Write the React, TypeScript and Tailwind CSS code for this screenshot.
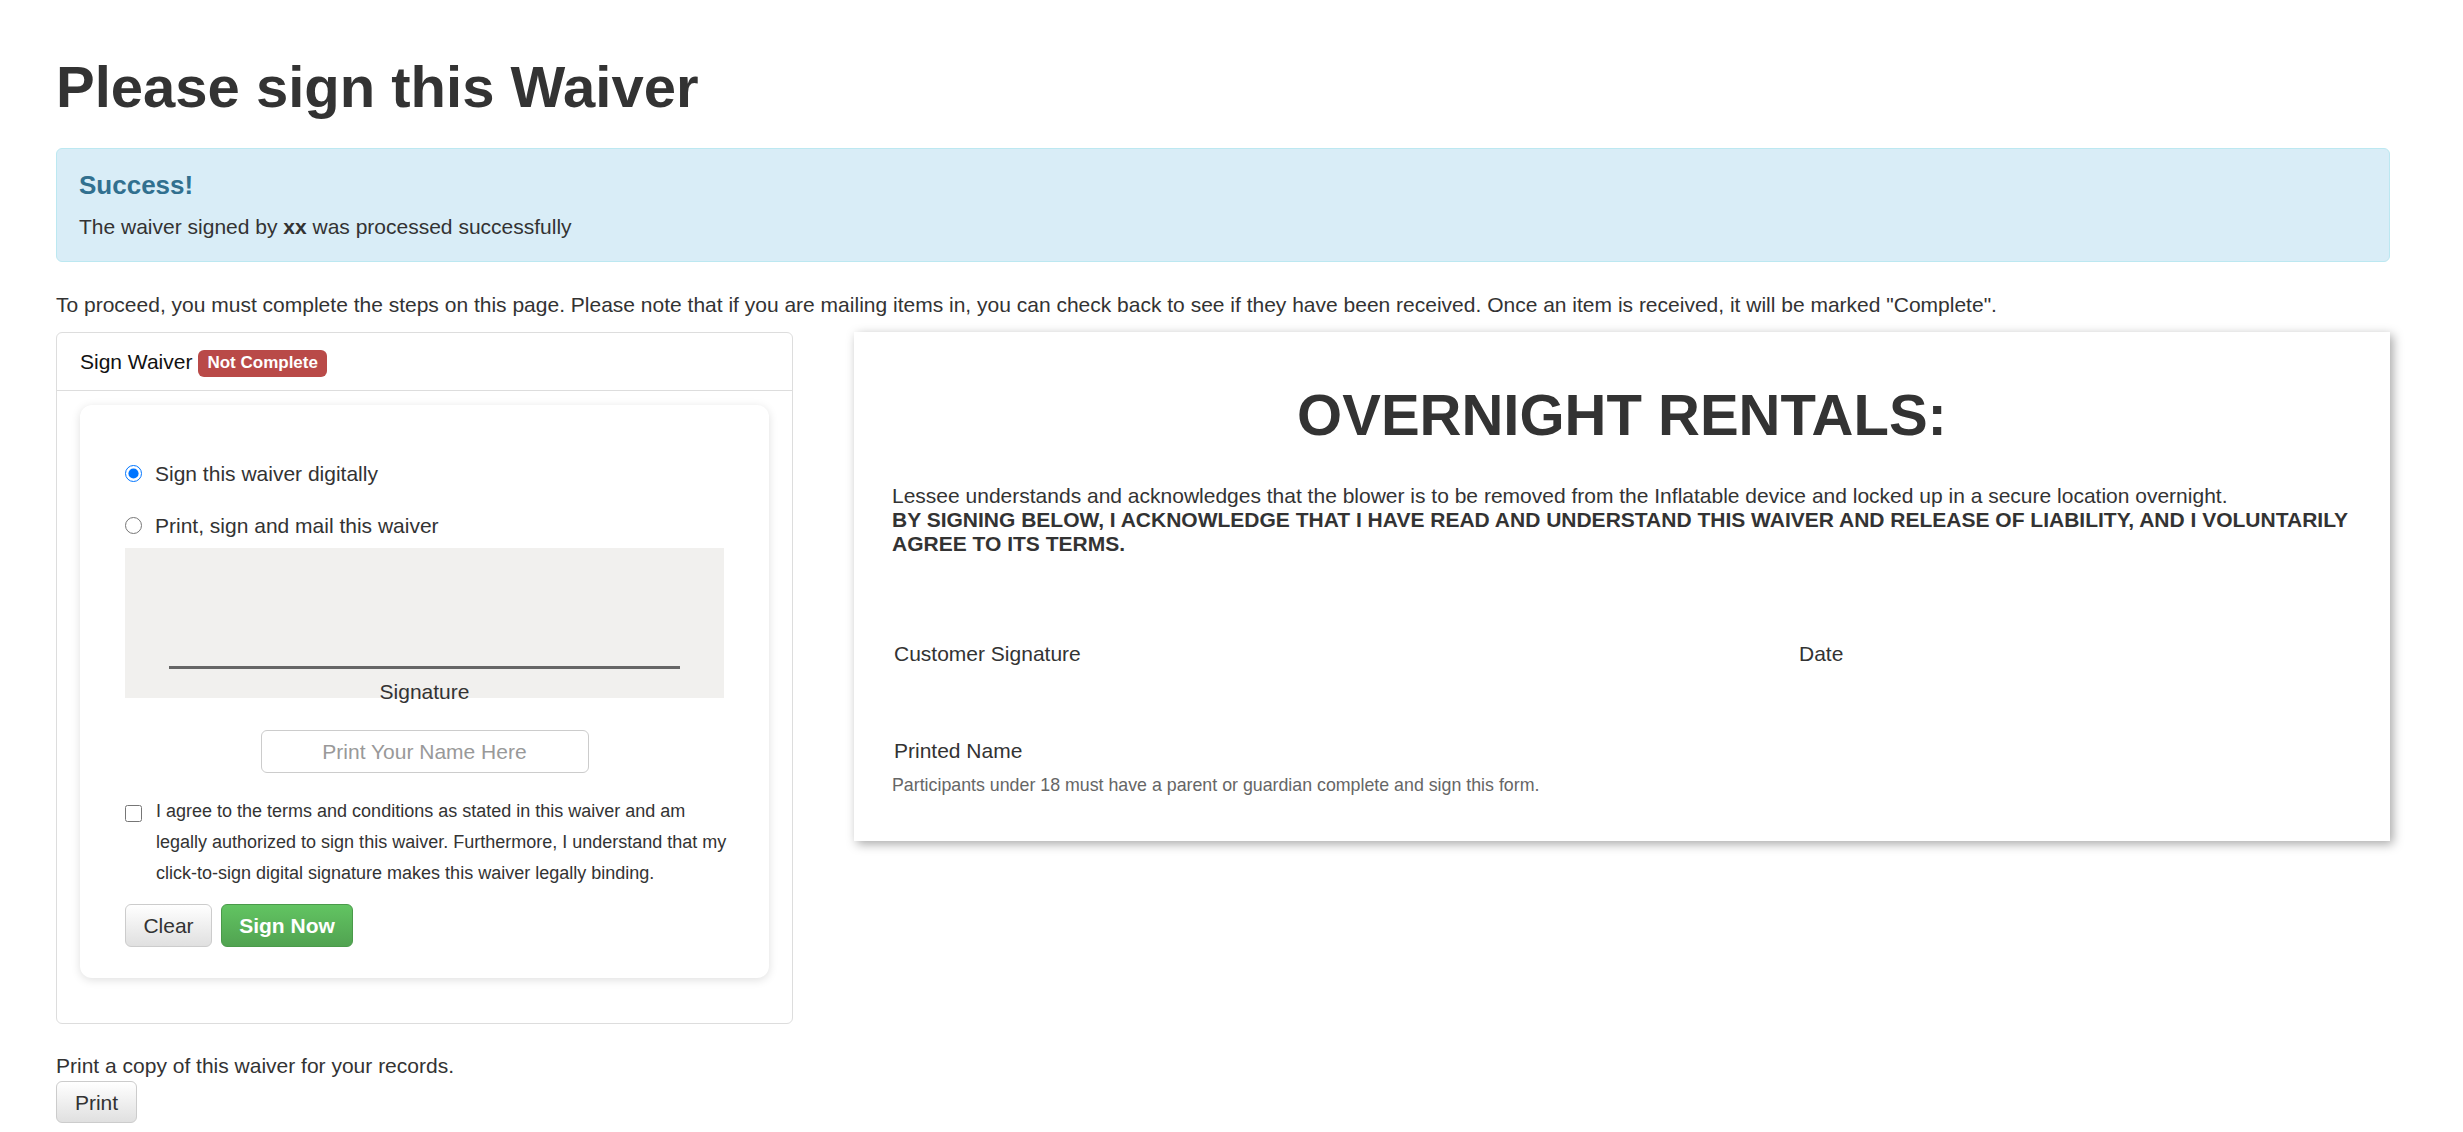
import React from 'react';

const font = { fontFamily: '"Liberation Sans", Arial, sans-serif' };

const SignWaiverPanel: React.FC = () => {
  return (
    <div className="w-[737px] shrink-0 rounded-[6px] border border-[#dddddd] bg-white">
      <div className="flex h-[58px] items-center border-b border-[#dddddd] px-[23px] text-[21px] leading-[30px] text-[#111]">
        <span>Sign Waiver</span>
        <span className="ml-[6px] mt-[3px] inline-flex h-[27px] items-center rounded-[6px] bg-[#b94a48] px-[9px] text-[17px] font-bold text-white">
          Not Complete
        </span>
      </div>
      <div className="px-[23px] pt-[14px] pb-[45px]">
        <div className="rounded-[12px] bg-white px-[45px] pt-[53px] pb-[31px] shadow-[0_2px_10px_rgba(0,0,0,0.13)]">
          <label className="flex h-[30px] items-center gap-[13px] text-[21px] text-[#333]">
            <input type="radio" name="mode" defaultChecked className="m-0 h-[17px] w-[17px]" />
            <span>Sign this waiver digitally</span>
          </label>
          <label className="mt-[22px] flex h-[30px] items-center gap-[13px] text-[21px] text-[#333]">
            <input type="radio" name="mode" className="m-0 h-[17px] w-[17px]" />
            <span>Print, sign and mail this waiver</span>
          </label>

          <div className="mt-[8px] h-[150px] bg-[#f1f0ee]">
            <div className="mx-[44px] h-[3px] translate-y-[118px] bg-[#666]" />
            <div className="translate-y-[126px] text-center text-[21px] leading-[30px] text-[#333]">Signature</div>
          </div>

          <div className="mt-[32px] flex justify-center">
            <input
              type="text"
              placeholder="Print Your Name Here"
              className="h-[43px] w-[328px] rounded-[6px] border border-[#cccccc] text-center text-[21px] text-[#333] outline-none placeholder:text-[#999]"
              style={font}
            />
          </div>

          <div className="mt-[23px] flex items-start gap-[14px]">
            <input type="checkbox" className="m-0 mt-[9px] h-[17px] w-[17px] shrink-0" />
            <p className="-mr-[10px] text-[18px] leading-[31px] text-[#333]">
              I agree to the terms and conditions as stated in this waiver and am legally authorized to sign this waiver.
              Furthermore, I understand that my click-to-sign digital signature makes this waiver legally binding.
            </p>
          </div>

          <div className="mt-[15px] flex gap-[9px]">
            <button
              className="h-[43px] w-[87px] rounded-[6px] border border-[#cccccc] bg-gradient-to-b from-white to-[#e0e0e0] text-[21px] text-[#333]"
              style={font}
            >
              Clear
            </button>
            <button
              className="h-[43px] w-[132px] rounded-[6px] border border-[#4a9a4a] bg-gradient-to-b from-[#62c462] to-[#51a351] text-[21px] font-bold text-white"
              style={font}
            >
              Sign Now
            </button>
          </div>
        </div>
      </div>
    </div>
  );
};

const WaiverDocument: React.FC = () => {
  return (
    <div className="flex-1 bg-white px-[38px] pt-[51px] pb-[43px] shadow-[3px_3px_10px_rgba(0,0,0,0.35)]">
      <h2 className="text-center text-[58px] font-bold leading-[1.1] text-[#333]">OVERNIGHT RENTALS:</h2>
      <div className="mt-[37px] text-[21px] leading-[24px] text-[#333]">
        <p>Lessee understands and acknowledges that the blower is to be removed from the Inflatable device and locked up in a secure location overnight.</p>
        <p className="font-bold">
          BY SIGNING BELOW, I ACKNOWLEDGE THAT I HAVE READ AND UNDERSTAND THIS WAIVER AND RELEASE OF LIABILITY, AND I VOLUNTARILY AGREE TO ITS TERMS.
        </p>
      </div>
      <div className="mt-[83px] flex pl-[2px] text-[21px] leading-[30px] text-[#333]">
        <div className="w-[905px]">Customer Signature</div>
        <div>Date</div>
      </div>
      <div className="mt-[67px] pl-[2px] text-[21px] leading-[30px] text-[#333]">Printed Name</div>
      <p className="mt-[7px] text-[17.8px] leading-[25px] text-[#666]">
        Participants under 18 must have a parent or guardian complete and sign this form.
      </p>
    </div>
  );
};

export default function App() {
  return (
    <div className="min-h-screen bg-white pl-[56px] pr-[73px] pt-[55px] pb-[12px] text-[#333]" style={font}>
      <h1 className="text-[58px] font-bold leading-[1.1] text-[#333]">Please sign this Waiver</h1>

      <div className="mt-[29px] rounded-[6px] border border-[#bce8f1] bg-[#d9edf7] px-[22px] pt-[22px] pb-[19px]">
        <h4 className="text-[26px] font-bold leading-[1.1] text-[#31708f]">Success!</h4>
        <p className="mt-[13px] text-[21px] leading-[30px] text-[#333]">
          The waiver signed by <b>xx</b> was processed successfully
        </p>
      </div>

      <p className="mt-[28px] text-[21px] leading-[30px]">
        To proceed, you must complete the steps on this page. Please note that if you are mailing items in, you can check back to see if they have been received. Once an item is received, it will be marked "Complete".
      </p>

      <div className="mt-[12px] flex items-start gap-[61px]">
        <SignWaiverPanel />
        <WaiverDocument />
      </div>

      <p className="mt-[27px] text-[21px] leading-[30px]">Print a copy of this waiver for your records.</p>
      <button
        className="h-[42px] w-[81px] rounded-[6px] border border-[#cccccc] bg-gradient-to-b from-white to-[#e0e0e0] text-[21px] text-[#333]"
        style={font}
      >
        Print
      </button>
    </div>
  );
}
